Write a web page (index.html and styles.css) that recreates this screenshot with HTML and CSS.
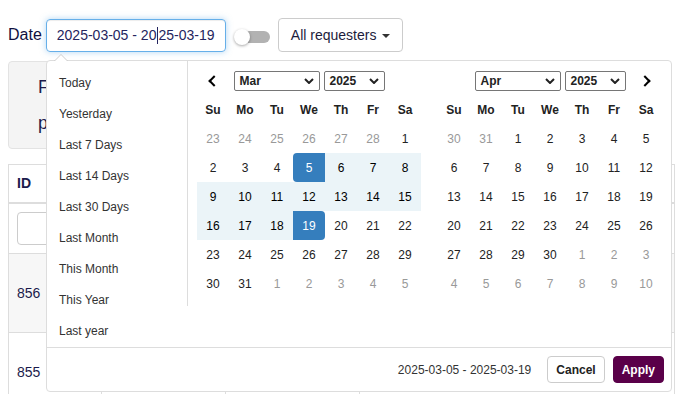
FILE: index.html
```html
<!DOCTYPE html>
<html>
<head>
    <meta charset="UTF-8">
    <title>Requests</title>
    <link rel="stylesheet" href="styles.css">
</head>
<body>
    <div class="toolbar">
        <span class="date-label">Date</span>
        <div class="date-input">2025-03-05 - 20<span class="text-caret"></span>25-03-19</div>
        <span class="toggle"><span class="knob"></span></span>
        <button class="btn-req">All requesters <span class="caret"></span></button>
    </div>

    <div class="well">
        <p>From</p>
        <p>pick</p>
    </div>

    <table class="grid">
        <tr class="head">
            <th class="c-id">ID</th><th class="c-a"></th><th class="c-b"></th><th></th>
        </tr>
        <tr class="filters">
            <td><span class="filter"></span></td><td><span class="filter"></span></td><td><span class="filter"></span></td><td><span class="filter"></span></td>
        </tr>
        <tr class="row odd">
            <td>856</td><td></td><td></td><td></td>
        </tr>
        <tr class="row">
            <td>855</td><td></td><td></td><td></td>
        </tr>
    </table>

    <div class="drp">
        <div class="drp-body">
            <ul class="ranges">
                <li>Today</li>
                <li>Yesterday</li>
                <li>Last 7 Days</li>
                <li>Last 14 Days</li>
                <li>Last 30 Days</li>
                <li>Last Month</li>
                <li>This Month</li>
                <li>This Year</li>
                <li>Last year</li>
            </ul>

            <div class="calendar left">
                <table class="cal">
                    <tr class="month-row">
                        <td><span class="arrow prev"></span></td>
                        <td colspan="5">
                            <div class="selects">
                                <span class="sel sel-month">Mar <svg width="10" height="6" viewBox="0 0 10 6"><path d="M1 1l4 4 4-4" fill="none" stroke="#222" stroke-width="2"/></svg></span>
                                <span class="sel sel-year">2025 <svg width="10" height="6" viewBox="0 0 10 6"><path d="M1 1l4 4 4-4" fill="none" stroke="#222" stroke-width="2"/></svg></span>
                            </div>
                        </td>
                        <td></td>
                    </tr>
                    <tr class="dow"><th>Su</th><th>Mo</th><th>Tu</th><th>We</th><th>Th</th><th>Fr</th><th>Sa</th></tr>
                    <tr><td class="off">23</td><td class="off">24</td><td class="off">25</td><td class="off">26</td><td class="off">27</td><td class="off">28</td><td>1</td></tr>
                    <tr><td>2</td><td>3</td><td>4</td><td class="active start">5</td><td class="in-range">6</td><td class="in-range">7</td><td class="in-range">8</td></tr>
                    <tr><td class="in-range">9</td><td class="in-range">10</td><td class="in-range">11</td><td class="in-range">12</td><td class="in-range">13</td><td class="in-range">14</td><td class="in-range">15</td></tr>
                    <tr><td class="in-range">16</td><td class="in-range">17</td><td class="in-range">18</td><td class="active end">19</td><td>20</td><td>21</td><td>22</td></tr>
                    <tr><td>23</td><td>24</td><td>25</td><td>26</td><td>27</td><td>28</td><td>29</td></tr>
                    <tr><td>30</td><td>31</td><td class="off">1</td><td class="off">2</td><td class="off">3</td><td class="off">4</td><td class="off">5</td></tr>
                </table>
            </div>

            <div class="calendar right">
                <table class="cal">
                    <tr class="month-row">
                        <td></td>
                        <td colspan="5">
                            <div class="selects">
                                <span class="sel sel-month">Apr <svg width="10" height="6" viewBox="0 0 10 6"><path d="M1 1l4 4 4-4" fill="none" stroke="#222" stroke-width="2"/></svg></span>
                                <span class="sel sel-year">2025 <svg width="10" height="6" viewBox="0 0 10 6"><path d="M1 1l4 4 4-4" fill="none" stroke="#222" stroke-width="2"/></svg></span>
                            </div>
                        </td>
                        <td><span class="arrow next"></span></td>
                    </tr>
                    <tr class="dow"><th>Su</th><th>Mo</th><th>Tu</th><th>We</th><th>Th</th><th>Fr</th><th>Sa</th></tr>
                    <tr><td class="off">30</td><td class="off">31</td><td>1</td><td>2</td><td>3</td><td>4</td><td>5</td></tr>
                    <tr><td>6</td><td>7</td><td>8</td><td>9</td><td>10</td><td>11</td><td>12</td></tr>
                    <tr><td>13</td><td>14</td><td>15</td><td>16</td><td>17</td><td>18</td><td>19</td></tr>
                    <tr><td>20</td><td>21</td><td>22</td><td>23</td><td>24</td><td>25</td><td>26</td></tr>
                    <tr><td>27</td><td>28</td><td>29</td><td>30</td><td class="off">1</td><td class="off">2</td><td class="off">3</td></tr>
                    <tr><td class="off">4</td><td class="off">5</td><td class="off">6</td><td class="off">7</td><td class="off">8</td><td class="off">9</td><td class="off">10</td></tr>
                </table>
            </div>
        </div>
        <div class="drp-buttons">
            <span class="drp-selected">2025-03-05 - 2025-03-19</span>
            <button class="btn-cancel">Cancel</button>
            <button class="btn-apply">Apply</button>
        </div>
    </div>
</body>
</html>
```

FILE: styles.css
```css
* {
    box-sizing: border-box;
}
body {
    margin: 0;
    padding: 18px 0 0 8px;
    width: 675px;
    height: 394px;
    overflow: hidden;
    position: relative;
    font-family: "Liberation Sans", Arial, sans-serif;
    font-size: 14px;
    color: #1b1b4b;
}
.toolbar {
    display: flex;
    align-items: center;
    height: 34px;
}
.date-label {
    font-size: 16px;
    margin-right: 4px;
    color: #10103f;
}
.date-input {
    width: 180px;
    height: 33px;
    padding: 0 10px;
    display: flex;
    align-items: center;
    border: 1px solid #66afe9;
    border-radius: 4px;
    box-shadow: inset 0 1px 1px rgba(0, 0, 0, 0.075), 0 0 6px rgba(102, 175, 233, 0.5);
    color: #25255e;
    white-space: nowrap;
}
.text-caret {
    display: inline-block;
    width: 1px;
    height: 17px;
    margin-left: 1px;
    background: #25255e;
}
.toggle {
    display: flex;
    align-items: center;
    width: 35px;
    height: 12px;
    margin: 4px 0 0 9px;
    border-radius: 6px;
    background-color: #b2b2b2;
}
.knob {
    width: 16px;
    height: 16px;
    margin-left: -1px;
    border-radius: 50%;
    background: white;
    box-shadow: 0 1px 3px rgba(0, 0, 0, 0.35);
}
.btn-req {
    margin-left: 8px;
    height: 34px;
    padding: 0 12px;
    border: 1px solid #ccc;
    border-radius: 4px;
    background: white;
    font-family: inherit;
    font-size: 14px;
    color: #1c1c3c;
}
.caret {
    display: inline-block;
    margin-left: 2px;
    vertical-align: middle;
    border-top: 4px solid #333;
    border-left: 4px solid transparent;
    border-right: 4px solid transparent;
}
.well {
    width: 640px;
    height: 88px;
    margin-top: 9px;
    padding: 7px 29px;
    background-color: #f4f4f4;
    border: 1px solid #e3e3e3;
    border-radius: 4px;
    font-size: 18px;
    line-height: 36px;
    white-space: nowrap;
    overflow: hidden;
}
.well p {
    margin: 0;
}
.grid {
    margin-top: 15px;
    width: 667px;
    border-collapse: collapse;
    border: 1px solid #ddd;
}
.grid th, .grid td {
    border: 1px solid #ddd;
    padding: 8px;
    text-align: left;
    vertical-align: middle;
}
.grid .head th {
    height: 38px;
    border-bottom: 2px solid #ddd;
}
.c-id {
    width: 93px;
}
.c-a {
    width: 124px;
}
.c-b {
    width: 134px;
}
.grid .filters td {
    height: 50px;
}
.filter {
    display: block;
    height: 33px;
    border: 1px solid #ccc;
    border-radius: 4px;
}
.grid .row td {
    height: 79px;
}
.grid .odd {
    background-color: #f7f7f7;
}

/* date range picker */
.drp {
    position: absolute;
    left: 46px;
    top: 60px;
    width: 626px;
    background: white;
    border: 1px solid #ddd;
    border-radius: 4px;
    color: #333;
    font-size: 12px;
}
.drp:before, .drp:after {
    content: "";
    position: absolute;
    border-left: 7px solid transparent;
    border-right: 7px solid transparent;
}
.drp:before {
    top: -7px;
    left: 7px;
    border-bottom: 7px solid #ccc;
}
.drp:after {
    top: -6px;
    left: 8px;
    border-left-width: 6px;
    border-right-width: 6px;
    border-bottom: 6px solid white;
}
.drp-body {
    display: flex;
    align-items: flex-start;
}
.ranges {
    list-style: none;
    margin: 0;
    padding: 7px 0 0;
    width: 140px;
}
.ranges li {
    height: 31px;
    line-height: 31px;
    padding: 0 12px;
}
.calendar {
    padding: 5px 8px 8px 9px;
}
.calendar.left {
    border-left: 1px solid #ddd;
}
.calendar.right {
    padding-right: 9px;
}
.cal {
    border-collapse: collapse;
    border-spacing: 0;
}
.cal th, .cal td {
    width: 32px;
    height: 29px;
    padding: 0;
    text-align: center;
    font-weight: normal;
    color: #222;
}
.cal th {
    font-weight: bold;
}
.cal td.off {
    color: #999;
}
.cal td.in-range {
    background-color: #ebf4f8;
    color: #000;
}
.cal td.active {
    background-color: #357ebd;
    color: white;
}
.cal td.start {
    border-radius: 4px 0 0 4px;
}
.cal td.end {
    border-radius: 0 4px 4px 0;
}
.selects {
    display: flex;
    justify-content: center;
    gap: 4px;
}
.sel {
    display: flex;
    align-items: center;
    justify-content: space-between;
    height: 20px;
    padding: 0 5px 0 5px;
    border: 1px solid #767676;
    border-radius: 2px;
    font-weight: bold;
    color: #222;
}
.sel-month {
    width: 86px;
}
.sel-year {
    width: 61px;
}
.arrow {
    display: inline-block;
    padding: 3px;
    border: solid #000;
    border-width: 0 2px 2px 0;
}
.arrow.prev {
    transform: rotate(135deg);
    margin-left: 2px;
}
.arrow.next {
    transform: rotate(-45deg);
    margin-right: 2px;
}
.drp-buttons {
    display: flex;
    align-items: center;
    justify-content: flex-end;
    padding: 8px 7px 8px 8px;
    border-top: 1px solid #ddd;
}
.drp-selected {
    margin-right: 16px;
    color: #333;
}
.drp-buttons button {
    height: 27px;
    padding: 0 8px;
    border-radius: 4px;
    font-family: inherit;
    font-size: 12px;
    font-weight: bold;
}
.btn-cancel {
    background: white;
    border: 1px solid #ccc;
    color: #222;
}
.btn-apply {
    margin-left: 8px;
    background-color: #5a0049;
    border: 1px solid #5a0049;
    color: white;
}
```
